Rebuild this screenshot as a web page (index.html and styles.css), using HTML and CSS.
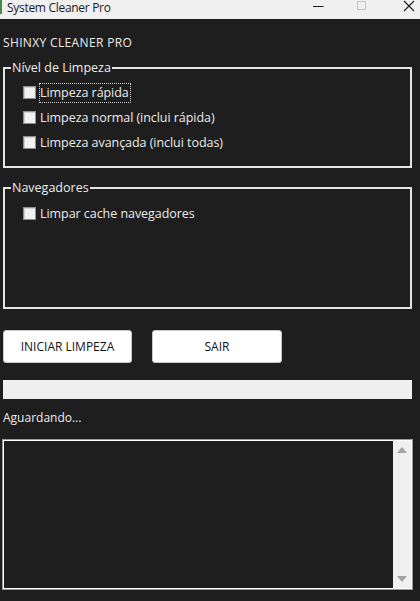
FILE: index.html
```html
<!DOCTYPE html>
<html lang="pt">
<head>
<meta charset="utf-8">
<title>System Cleaner Pro</title>
<link rel="stylesheet" href="styles.css">
</head>
<body>
<div class="titlebar">
  <span class="app-mark"></span>
  <span class="title">System Cleaner Pro</span>
  <div class="controls">
    <span class="ctl ctl-min"><svg width="11" height="11" viewBox="0 0 11 11"><path d="M0 6.5H10.5" stroke="#1a1a1a" stroke-width="1"/></svg></span>
    <span class="ctl ctl-max"><svg width="11" height="11" viewBox="0 0 11 11"><rect x="1.5" y="1.5" width="8" height="8" fill="none" stroke="#c4c4c4" stroke-width="1"/></svg></span>
    <span class="ctl ctl-close"><svg width="12" height="12" viewBox="0 0 12 12"><path d="M1 1L11 11M11 1L1 11" stroke="#1a1a1a" stroke-width="1.1"/></svg></span>
  </div>
</div>

<main class="app">
  <div class="heading">SHINXY CLEANER PRO</div>

  <fieldset class="group group-level">
    <legend>Nível de Limpeza</legend>
    <div class="opt"><span class="box"></span><span class="lbl focus">Limpeza rápida</span></div>
    <div class="opt"><span class="box"></span><span class="lbl">Limpeza normal (inclui rápida)</span></div>
    <div class="opt"><span class="box"></span><span class="lbl">Limpeza avançada (inclui todas)</span></div>
  </fieldset>

  <fieldset class="group group-browsers">
    <legend>Navegadores</legend>
    <div class="opt"><span class="box"></span><span class="lbl">Limpar cache navegadores</span></div>
  </fieldset>

  <div class="actions">
    <button class="btn btn-start">INICIAR LIMPEZA</button>
    <button class="btn btn-exit">SAIR</button>
  </div>

  <div class="progress"></div>

  <div class="status">Aguardando...</div>

  <div class="log">
    <div class="log-body"></div>
    <div class="scrollbar">
      <svg width="10" height="6" viewBox="0 0 10 6"><path d="M5 0L10 6H0Z" fill="#a3a3a3"/></svg>
      <svg width="10" height="6" viewBox="0 0 10 6"><path d="M0 0H10L5 6Z" fill="#a3a3a3"/></svg>
    </div>
  </div>
</main>
</body>
</html>
```

FILE: styles.css
```css
* { box-sizing: border-box; }

html, body {
  margin: 0;
  padding: 0;
  background: #1e1e1e;
  height: 100%;
}

body {
  font-family: "Open Sans", "Noto Sans", sans-serif;
  font-size: 12px;
  color: #e8e8e8;
  overflow: hidden;
}

.titlebar {
  height: 19px;
  background: #f0f0f0;
  display: flex;
  align-items: flex-start;
}

.app-mark {
  width: 2px;
  height: 14px;
  background: #3f8f3f;
}

.title {
  margin-left: 5px;
  color: #1a1a1a;
  font-size: 12px;
  letter-spacing: -0.3px;
  line-height: 15px;
}

.controls {
  margin-left: auto;
  display: flex;
  align-items: flex-start;
}

.ctl {
  display: flex;
  height: 12px;
}

.ctl-min { margin-right: 32px; }
.ctl-max { margin-right: 36px; }
.ctl-close { margin-right: 5px; }

.app {
  padding: 0 8px 0 3px;
}

.heading {
  margin-top: 16px;
  line-height: 16px;
  font-size: 12px;
  letter-spacing: 0.35px;
  color: #ececec;
}

.group {
  margin: 0;
  border: 2px solid #e4e4e4;
  border-radius: 0;
  padding: 4px 0 11px 18px;
}

.group legend {
  padding: 0 1px;
  margin-left: -12px;
  font-size: 12.5px;
  line-height: 16px;
  color: #ececec;
}

.group-level {
  margin-top: 9px;
}

.group-browsers {
  margin-top: 12px;
  padding-top: 5px;
  padding-bottom: 81px;
}

.opt {
  height: 25px;
  display: flex;
  align-items: center;
}

.box {
  width: 13px;
  height: 13px;
  background: #f2f2f2;
  border: 1px solid #8f8f8f;
  box-shadow: inset 1px 1px 0 #d0d0d0;
  margin-right: 4px;
  flex: none;
}

.lbl {
  font-size: 12.5px;
  letter-spacing: -0.05px;
  line-height: 16px;
  color: #ececec;
  padding: 1px 1px 1px 0;
}

.lbl.focus {
  outline: 1px dotted #cfcfcf;
  outline-offset: 0;
}

.actions {
  margin-top: 21px;
  display: flex;
  gap: 20px;
}

.btn {
  height: 33px;
  background: #ffffff;
  border: 1px solid #c8c8c8;
  border-radius: 3px;
  font-family: inherit;
  font-size: 12px;
  color: #141414;
  padding: 0;
}

.btn-start { width: 129px; }
.btn-exit { width: 130px; }

.progress {
  margin-top: 17px;
  height: 19px;
  background: #efefef;
}

.status {
  margin-top: 11px;
  line-height: 16px;
  font-size: 12px;
  color: #ececec;
}

.log {
  margin-top: 14px;
  height: 149px;
  display: flex;
  border: 1px solid #ffffff;
  box-shadow: 0 0 0 1px #9a9a9a;
}

.log-body {
  flex: 1;
  background: #1e1e1e;
}

.scrollbar {
  width: 18px;
  background: #f0f0f0;
  display: flex;
  flex-direction: column;
  align-items: center;
  justify-content: space-between;
  padding: 6px 0 6px;
}
```
